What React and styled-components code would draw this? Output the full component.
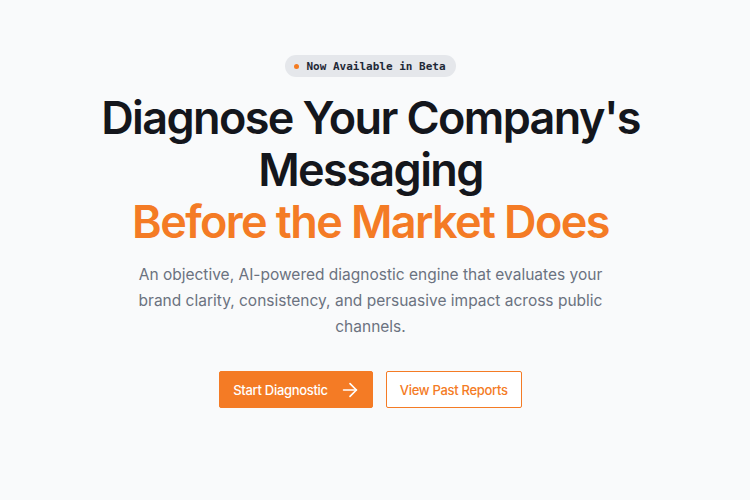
import React from "react";
import styled, { createGlobalStyle } from "styled-components";

const Global = createGlobalStyle`
  html, body { margin: 0; padding: 0; background: #f9fafb; }
  body { font-family: Inter, "Noto Sans", sans-serif; }
  * { box-sizing: border-box; }
`;

const Page = styled.main`
  width: 741px;
  height: 500px;
  display: flex;
  flex-direction: column;
  align-items: center;
  padding-top: 55px;
  background: #f9fafb;
`;

const Badge = styled.div`
  display: inline-flex;
  align-items: center;
  gap: 7px;
  height: 22px;
  padding: 0 10px 0 9px;
  border-radius: 11px;
  background: #e5e7eb;
  font-family: "DejaVu Sans Mono", "Liberation Mono", monospace;
  font-weight: 700;
  font-size: 11px;
  color: #1f2937;
`;

const Dot = styled.span`
  width: 5px;
  height: 5px;
  border-radius: 50%;
  background: #f47b20;
`;

const Title = styled.h1`
  margin: 15px 0 0;
  text-align: center;
  font-size: 45px;
  line-height: 52px;
  font-weight: 600;
  letter-spacing: -1.6px;
  color: #14161c;
`;

const Accent = styled.span`
  display: block;
  color: #f47b25;
`;

const Lead = styled.p`
  margin: 14px 0 0;
  max-width: 474px;
  text-align: center;
  font-size: 15.5px;
  line-height: 26px;
  color: #6b7280;
`;

const Actions = styled.div`
  display: flex;
  gap: 13px;
  margin-top: 31px;
`;

const Button = styled.button`
  display: inline-flex;
  align-items: center;
  gap: 11px;
  height: 37px;
  padding: 0 ${(p) => (p.$primary ? "11px" : "13px")} 0 13px;
  font-family: inherit;
  font-size: 13px;
  font-weight: 500;
  letter-spacing: -0.3px;
  border-radius: 2px;
  cursor: pointer;
  border: 1px solid #f47b25;
  background: ${(p) => (p.$primary ? "#f47b25" : "#ffffff")};
  color: ${(p) => (p.$primary ? "#ffffff" : "#f47b25")};
`;

const Arrow = () => (
  <svg width="22" height="22" viewBox="0 0 24 24" fill="none" stroke="currentColor" strokeWidth="1.8" strokeLinecap="round" strokeLinejoin="round">
    <path d="M5 12h14" />
    <path d="m12 5 7 7-7 7" />
  </svg>
);

export default function App() {
  return (
    <>
      <Global />
      <Page>
        <Badge>
          <Dot />
          Now Available in Beta
        </Badge>
        <Title>
          Diagnose Your Company's
          <br />
          Messaging
          <Accent>Before the Market Does</Accent>
        </Title>
        <Lead>
          An objective, AI-powered diagnostic engine that evaluates your brand clarity, consistency, and persuasive impact across public channels.
        </Lead>
        <Actions>
          <Button $primary>
            Start Diagnostic
            <Arrow />
          </Button>
          <Button>View Past Reports</Button>
        </Actions>
      </Page>
    </>
  );
}
